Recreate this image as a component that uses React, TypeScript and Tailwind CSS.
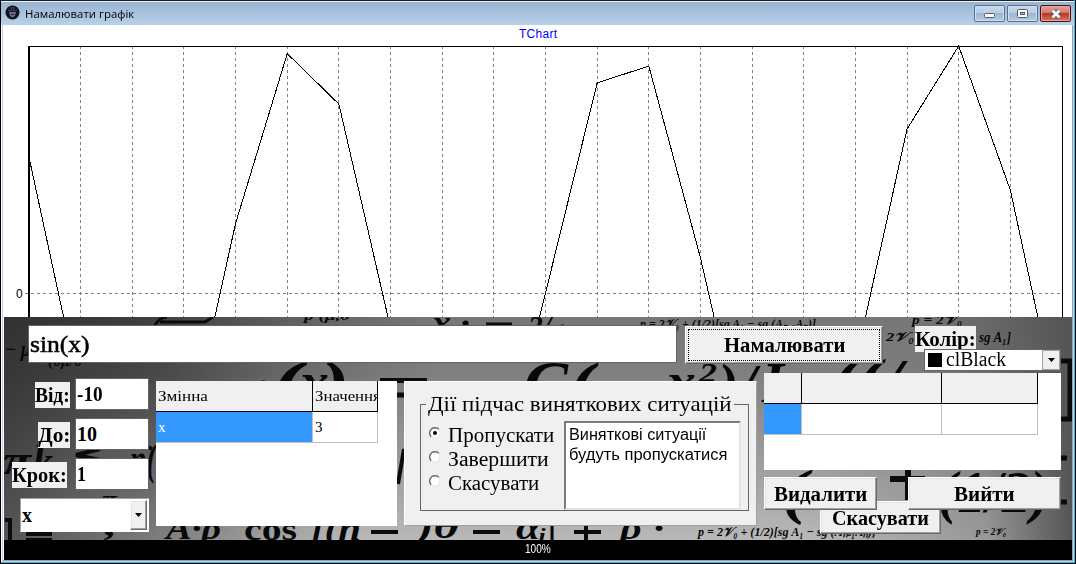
import React from "react";

const serif = "font-['Liberation_Serif',serif]";
const raised =
  "bg-[#f0f0f0] border border-t-white border-l-white border-r-[#696969] border-b-[#696969] shadow-[inset_-1px_-1px_0_#a0a0a0,inset_1px_1px_0_#e3e3e3]";

const samples = Array.from({ length: 21 }, (_, i) => i - 10);
const xPos = (v: number) => 545.5 + v * 51.65;
const yPos = (v: number) => 268 - v * 249.6;

function T({ w, className = "", children }: { w: number; className?: string; children: string }) {
  const ref = React.useRef<HTMLSpanElement>(null);
  React.useLayoutEffect(() => {
    const el = ref.current;
    if (!el) return;
    el.style.transform = `scaleX(${w / el.offsetWidth})`;
  }, [w]);
  return (
    <span className="block shrink-0" style={{ width: w }}>
      <span ref={ref} className={`inline-block origin-left whitespace-nowrap ${className}`}>{children}</span>
    </span>
  );
}

function Chart() {
  return (
    <svg className="block h-[292px] w-full" viewBox="4 0 1068 292" shapeRendering="crispEdges">
      <text x="519" y="13" fontSize="12" fill="#0000ff" textLength="38" fontFamily="Liberation Sans">TChart</text>
      <text x="16" y="273" fontSize="12" fill="#000" fontFamily="Liberation Sans">0</text>
      {samples.slice(1, 20).map((s) => (
        <line key={s} x1={Math.floor(xPos(s)) + 0.5} x2={Math.floor(xPos(s)) + 0.5} y1="21" y2="292" stroke="#808080" strokeDasharray="3 3" />
      ))}
      <line x1="25" x2="1062" y1="268.5" y2="268.5" stroke="#808080" strokeDasharray="3 3" />
      <path d="M29 21.5H1062.5V292" fill="none" stroke="#000" />
      <path d="M29 21V292" stroke="#000" strokeWidth="2" />
      <polyline points={samples.map((s) => `${xPos(s)},${yPos(Math.sin(s))}`).join(" ")} fill="none" stroke="#000" />
    </svg>
  );
}

function Formula({ x, y, s, w, up, children }: { x: number; y: number; s: number; w: number; up?: boolean; children: string }) {
  return (
    <text x={x} y={y} fontSize={s} textLength={w} lengthAdjust="spacingAndGlyphs" fontStyle={up ? "normal" : "italic"} fill="#080808">{children}</text>
  );
}

function Backdrop() {
  return (
    <svg className="absolute inset-0 h-full w-full" viewBox="4 317 1068 223" fontFamily="Liberation Serif" fontWeight="bold">
      <defs>
        <linearGradient id="base" x1="0" x2="1" y1="0" y2="0">
          <stop offset="0" stopColor="#323232" />
          <stop offset=".15" stopColor="#414141" />
          <stop offset=".27" stopColor="#606060" />
          <stop offset=".4" stopColor="#777" />
          <stop offset=".85" stopColor="#777" />
          <stop offset="1" stopColor="#555" />
        </linearGradient>
        <linearGradient id="low" x1="0" x2="1" y1="0" y2="0">
          <stop offset="0" stopColor="#555" />
          <stop offset=".17" stopColor="#858585" />
          <stop offset=".32" stopColor="#b8b8b8" />
          <stop offset=".75" stopColor="#b8b8b8" />
          <stop offset=".92" stopColor="#999" />
          <stop offset="1" stopColor="#555" />
        </linearGradient>
        <linearGradient id="fade" x1="0" x2="0" y1="0" y2="1">
          <stop offset="0" stopColor="#000" />
          <stop offset=".25" stopColor="#222" />
          <stop offset="1" stopColor="#fff" />
        </linearGradient>
        <mask id="lower"><rect x="4" y="317" width="1068" height="223" fill="url(#fade)" /></mask>
      </defs>
      <rect x="4" y="317" width="1068" height="223" fill="url(#base)" />
      <rect x="4" y="317" width="1068" height="223" fill="url(#low)" mask="url(#lower)" />
      <path d="M155 325Q160 317 167 317M160 322H205L213 317" fill="none" stroke="#0b0b0b" strokeWidth="3" />
      <Formula x={5} y={356} s={20} w={26}>− μ</Formula>
      <Formula x={48} y={366} s={14} w={34}>(0μ/0</Formula>
      <Formula x={304} y={320} s={13} w={46}>p (μ,0</Formula>
      <Formula x={432} y={334} s={34} w={38}>x ·</Formula>
      <path d="M486 324H512" stroke="#0b0b0b" strokeWidth="3" />
      <Formula x={528} y={336} s={30} w={38}>2/ ·</Formula>
      <Formula x={640} y={328} s={13} w={176}>p = 2𝒱₀ + (1/2)[sg A₁ − sg (Aₙ₋₁Aₙ)]</Formula>
      <Formula x={912} y={324} s={13} w={50}>p = 2𝒱₀</Formula>
      <Formula x={886} y={341} s={13} w={28}>2𝒱₀</Formula>
      <Formula x={979} y={342} s={14} w={32}>sg A₁]</Formula>
      <Formula x={243} y={404} s={50} w={22}>r</Formula>
      <Formula x={270} y={409} s={70} w={32}>(</Formula>
      <Formula x={299} y={397} s={48} w={30}>x</Formula>
      <Formula x={320} y={409} s={70} w={30}>)</Formula>
      <path d="M380 380.5H427M397 395H404" stroke="#0b0b0b" strokeWidth="5" />
      <Formula x={524} y={403} s={62} w={44}>C</Formula>
      <Formula x={568} y={408} s={66} w={26}>(</Formula>
      <Formula x={666} y={397} s={48} w={30}>x</Formula>
      <Formula x={699} y={382} s={28} w={18}>2</Formula>
      <Formula x={718} y={405} s={60} w={38}>)/</Formula>
      <Formula x={762} y={402} s={56} w={22}>I</Formula>
      <Formula x={832} y={400} s={60} w={70}>((/</Formula>
      <path d="M1061 361H1070V419H1061" fill="none" stroke="#0b0b0b" strokeWidth="5" />
      <Formula x={3} y={474} s={42} w={28}>π</Formula>
      <Formula x={33} y={476} s={44} w={20}>k</Formula>
      <path d="M111 434Q130 438 152 449M100 449L76 455L100 460" fill="none" stroke="#0b0b0b" strokeWidth="4" />
      <Formula x={130} y={474} s={44} w={26}>η(</Formula>
      <path d="M5 520H10V542M26 534H52M26 540H52M398 484L404 449" fill="none" stroke="#0b0b0b" strokeWidth="4" />
      <Formula x={102} y={507} s={24} w={15}>π</Formula>
      <Formula x={105} y={535} s={30} w={12}>,</Formula>
      <Formula x={166} y={539} s={32} w={66}>A·ρ′</Formula>
      <Formula x={244} y={540} s={31} w={53} up>cos</Formula>
      <Formula x={311} y={540} s={34} w={50}>[(n</Formula>
      <Formula x={417} y={538} s={34} w={42}>)θ</Formula>
      <Formula x={516} y={539} s={34} w={41}>αᵢ|</Formula>
      <path d="M371 532H398M473 532H500M574 532H601M586 526V540" stroke="#0b0b0b" strokeWidth="4" />
      <Formula x={620} y={539} s={34} w={44}>ρ′·</Formula>
      <Formula x={782} y={512} s={62} w={26}>(</Formula>
      <Formula x={805} y={508} s={56} w={32}>x</Formula>
      <path d="M890 479H925M908 466V500" stroke="#0b0b0b" strokeWidth="6" />
      <Formula x={938} y={512} s={60} w={112}>(1/2)</Formula>
      <path d="M1061 458H1067M1061 502H1067" stroke="#0b0b0b" strokeWidth="5" />
      <Formula x={698} y={536} s={13} w={178}>p = 2𝒱₀ + (1/2)[sg A₁ − sg (Aₙ₋₁Aₙ)]</Formula>
      <Formula x={976} y={535} s={10} w={30}>p = 2𝒱₀</Formula>
    </svg>
  );
}

function Field({ label, lw, tw, value, vw }: { label: string; lw: string; tw: number; value: string; vw: number }) {
  return (
    <div className="flex h-8 w-[137px] items-start justify-end">
      <div className={`${lw} mt-1 h-[26px] bg-[#f0f0f0]`}>
        <T w={tw} className="text-[20px] font-bold leading-[27px]">{label}</T>
      </div>
      <div className="h-8 w-[74px] border border-[#646464] bg-white pl-px">
        <T w={vw} className="text-[20px] font-bold leading-[30px]">{value}</T>
      </div>
    </div>
  );
}

function Radio({ label, w, on = false }: { label: string; w: number; on?: boolean }) {
  return (
    <div className="flex h-6 gap-[7px]">
      <svg className="mt-[5px]" width="12" height="12" viewBox="0 0 12 12">
        <circle cx="6" cy="6" r="5.2" fill="#fff" stroke="#e3e3e3" />
        <path d="M2.2 9.8A5.3 5.3 0 0 1 9.8 2.2" fill="none" stroke="#777" strokeWidth="1.5" />
        {on && <circle cx="6" cy="6" r="2" />}
      </svg>
      <T w={w} className="text-[20px] leading-[26px]">{label}</T>
    </div>
  );
}

function Panel() {
  return (
    <div className={`relative h-[223px] overflow-hidden text-black ${serif}`}>
      <Backdrop />
      <div className="relative flex h-14 pl-6 pt-2">
        <div className="h-[38px] w-[649px] border border-[#646464] bg-white pl-px">
          <T w={60} className="text-[23px] leading-[38px] [-webkit-text-stroke:0.5px_black]">sin(x)</T>
        </div>
        <div className={`ml-2 mt-px h-[38px] w-[198px] p-[2px] ${raised}`}>
          <div className="flex h-full items-center justify-center border border-dotted border-black pt-[2px]">
            <T w={121} className="text-[20px] font-bold leading-6">Намалювати</T>
          </div>
        </div>
        <div className="relative ml-8 mt-px h-[45px] w-[146px]">
          <div className="h-[26px] w-[61px] bg-[#f0f0f0]">
            <T w={61} className="text-[20px] font-bold leading-[27px]">Колір:</T>
          </div>
          <div className="absolute left-[9px] top-[23px] flex h-[22px] w-[137px] items-center border border-[#646464] bg-white pl-[3px]">
            <div className="mr-[4px] h-[14px] w-[14px] bg-black" />
            <T w={60} className="text-[20px] leading-[22px]">clBlack</T>
            <div className="ml-auto flex h-5 w-[18px] items-center justify-center border border-[#a0a0a0] bg-[#f0f0f0]">
              <svg width="7" height="4"><path d="M0 0H7L3.5 4Z" /></svg>
            </div>
          </div>
        </div>
      </div>
      <div className="relative flex items-start pl-2">
        <div className="flex w-[137px] flex-col gap-2 pt-[5px]">
          <Field label="Від:" lw="mr-[5px] w-[35px]" tw={35} value="-10" vw={26} />
          <Field label="До:" lw="mr-[5px] w-8" tw={32} value="10" vw={20} />
          <Field label="Крок:" lw="mr-2 w-[55px]" tw={55} value="1" vw={9} />
          <div className="ml-2 flex h-[34px] w-[129px] border border-t-[#a0a0a0] border-l-[#a0a0a0] border-r-white border-b-white bg-white p-px">
            <T w={10} className="text-[20px] font-bold leading-[31px]">x</T>
            <div className={`ml-auto flex w-[17px] items-center justify-center ${raised}`}>
              <svg width="7" height="4"><path d="M0 0H7L3.5 4Z" /></svg>
            </div>
          </div>
        </div>
        <div className="ml-[7px] mt-2 h-[145px] w-[241px] bg-white">
          <div className="flex h-[31px] w-[222px] border-b border-black bg-[#f0f0f0] leading-[29px]">
            <div className="w-[157px] border-r border-black pl-[2px]"><T w={50} className="text-[14px]">Змінна</T></div>
            <div className="w-[65px] overflow-hidden border-r border-black pl-[2px]"><T w={66} className="text-[14px]">Значення</T></div>
          </div>
          <div className="flex h-[31px] w-[222px] border-b border-[#c0c0c0] leading-[29px]">
            <div className="w-[157px] border-r border-[#c0c0c0] bg-[#3399ff] pl-[2px] text-white"><T w={8} className="text-[15px]">x</T></div>
            <div className="w-[65px] border-r border-[#c0c0c0] pl-[2px]"><T w={8} className="text-[15px]">3</T></div>
          </div>
        </div>
        <div className="ml-[7px] mt-2 h-[145px] w-[353px] border border-t-white border-l-white border-r-[#a0a0a0] border-b-[#a0a0a0] bg-[#f0f0f0] pl-[15px] pt-[9px]">
          <fieldset className="flex h-[120px] w-[329px] border border-[#646464] pl-2">
            <legend className="-ml-[3px] h-[26px] px-[2px]">
              <T w={304} className="text-[21px] leading-[27px]">Дії підчас виняткових ситуацій</T>
            </legend>
            <div className="mt-[5px] w-[135px]">
              <Radio label="Пропускати" w={106} on />
              <Radio label="Завершити" w={101} />
              <Radio label="Скасувати" w={91} />
            </div>
            <div className="mt-[4px] h-[89px] w-[177px] border-2 border-t-[#7c7c7c] border-l-[#7c7c7c] border-r-[#e3e3e3] border-b-[#e3e3e3] bg-white pl-[3px] pt-[2px] font-['Liberation_Sans',sans-serif] text-[16px] leading-5">
              <T w={137}>Виняткові ситуації</T>
              <T w={159}>будуть пропускатися</T>
            </div>
          </fieldset>
        </div>
        <div className="ml-[7px] w-[297px]">
          <div className="h-[97px] bg-white">
            <div className="flex h-[31px] w-[274px] border-b border-black bg-[#f0f0f0]">
              <div className="w-[38px] border-r border-black" />
              <div className="w-[140px] border-r border-black" />
              <div className="w-24 border-r border-black" />
            </div>
            <div className="flex h-[31px] w-[274px] border-b border-[#c0c0c0]">
              <div className="w-[38px] border-r border-[#c0c0c0] bg-[#3399ff]" />
              <div className="w-[140px] border-r border-[#c0c0c0]" />
              <div className="w-24 border-r border-[#c0c0c0]" />
            </div>
          </div>
          <div className="relative mt-[7px] flex justify-between">
            <div className={`absolute left-14 top-6 flex h-[33px] w-[121px] items-center justify-center pt-[2px] ${raised}`}>
              <T w={97} className="text-[20px] font-bold leading-6">Скасувати</T>
            </div>
            <div className={`relative flex h-[33px] w-[113px] items-center justify-center pt-[2px] ${raised}`}>
              <T w={93} className="text-[20px] font-bold leading-6">Видалити</T>
            </div>
            <div className={`relative flex h-[33px] w-[153px] items-center justify-center pt-[2px] ${raised}`}>
              <T w={61} className="text-[20px] font-bold leading-6">Вийти</T>
            </div>
          </div>
        </div>
      </div>
    </div>
  );
}

function TitleBar() {
  const btn =
    "flex h-[17px] w-[31px] items-center justify-center rounded-[2px] border border-[#59708a] bg-[linear-gradient(#c5d7ea_0%,#b9cde2_48%,#9cb6d3_50%,#b4cbe4_100%)] shadow-[inset_0_0_0_1px_#d2e1f1]";
  return (
    <div className="flex h-[25px] shrink-0 items-start border-t border-[#1d1d26] bg-[linear-gradient(#eef4fb_0,#eef4fb_1px,#98b4d2_1px,#b9d1ea_100%)] pl-[4px] pr-[3px] pt-1">
      <svg width="15" height="15" viewBox="0 0 15 15">
        <circle cx="7.5" cy="7.5" r="7" fill="#11121a" />
        <path d="M3 5L6 6L7.5 4L9 6L12 5M5 3H10" fill="none" stroke="#4a5178" />
        <path d="M4 7H11L10 11L7.5 12.5L5 11Z" fill="#686e94" />
        <path d="M6 9.5H9" stroke="#20222e" />
      </svg>
      <div className="ml-[5px] mt-px font-['Open_Sans',sans-serif] text-[11px] leading-[15px] text-black"><T w={109}>Намалювати графік</T></div>
      <div className="ml-auto flex gap-[2px]">
        <div className={btn}><svg className="mt-[3px]" width="11" height="5"><rect x=".5" y=".5" width="10" height="4" rx="1" fill="#fff" stroke="#555b6e" /></svg></div>
        <div className={btn}><svg width="11" height="9"><rect x=".5" y=".5" width="10" height="8" rx="1" fill="#fff" stroke="#555b6e" /><rect x="3.5" y="3.5" width="4" height="2" fill="#a8bdd6" stroke="#555b6e" /></svg></div>
        <div className="flex h-[17px] w-[31px] items-center justify-center rounded-[2px] border border-[#4a101c] bg-[linear-gradient(#e3a499_0%,#d0766a_48%,#b93524_50%,#d2745c_100%)] shadow-[inset_0_0_0_1px_#e5a598]">
          <svg width="12" height="10" viewBox="0 0 12 10"><path d="M2.5 1.5L9.5 8.5M9.5 1.5L2.5 8.5" stroke="#555b6e" strokeWidth="4.6" /><path d="M2.5 1.5L9.5 8.5M9.5 1.5L2.5 8.5" stroke="#fff" strokeWidth="2.8" /></svg>
        </div>
      </div>
    </div>
  );
}

export default function App() {
  return (
    <div className="h-[564px] w-[1076px] overflow-hidden border-b border-l border-r border-black bg-white">
      <div className="flex h-[563px] flex-col border-b border-r border-b-[#21c3e8] border-r-[#21c3e8]">
        <TitleBar />
        <div className="ml-px flex h-[537px] flex-col border-b border-l border-r border-[#b9d1ea]">
          <div className="flex flex-col border-r border-[#a0a0a0] pl-px">
            <Chart />
            <Panel />
            <div className="flex h-5 justify-center bg-black pt-px font-['Liberation_Sans',sans-serif] text-[12px] leading-[17px] text-white"><T w={26}>100%</T></div>
          </div>
          <div className="h-px bg-[#a0a0a0]" />
        </div>
      </div>
    </div>
  );
}
